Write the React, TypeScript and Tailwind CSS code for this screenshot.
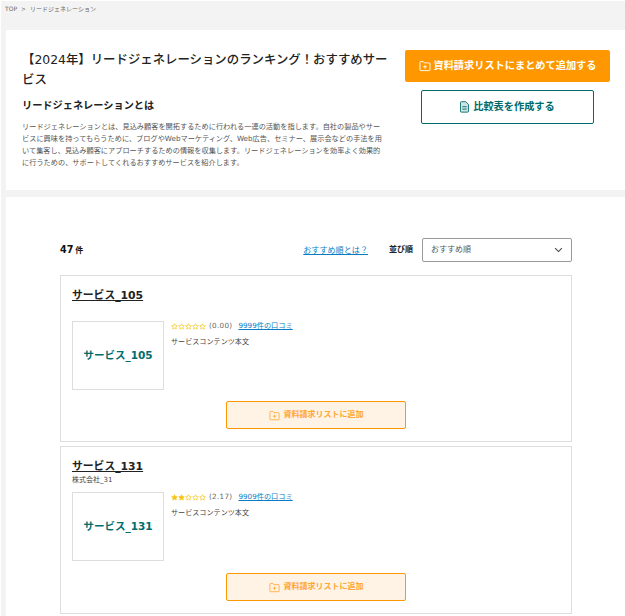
import React from "react";

const font = { fontFamily: '"DejaVu Sans","Noto Sans CJK JP",sans-serif' };

function FolderPlus({ className }: { className: string }) {
  return (
    <svg viewBox="0 0 12 12" className={className} fill="none" stroke="currentColor" strokeWidth="0.9">
      <path d="M1 2.2 a.6 .6 0 0 1 .6-.6 H4.4 L5.4 2.9 H10.4 a.6 .6 0 0 1 .6 .6 V10 a.6 .6 0 0 1-.6 .6 H1.6 a.6 .6 0 0 1-.6-.6 Z" />
      <path d="M6 5 V8.6 M4.2 6.8 H7.8" />
    </svg>
  );
}

function FileIcon() {
  return (
    <svg viewBox="0 0 10 13" className="w-[9px] h-[12px] text-[#006a6a]" fill="#cfe3e3" stroke="currentColor" strokeWidth="1">
      <path d="M1.5 .6 H6.4 L9.4 3.6 V11.2 a1 1 0 0 1-1 1 H1.5 a1 1 0 0 1-1-1 V1.6 a1 1 0 0 1 1-1 Z" />
      <path d="M2.6 6.2 H7.4 M2.6 8.8 H7.4" fill="none" />
    </svg>
  );
}

function Star({ filled }: { filled: boolean }) {
  return (
    <svg viewBox="0 0 24 24" className="w-[7px] h-[7px]" fill={filled ? "#f5c518" : "none"} stroke="#f5c518" strokeWidth="2.4">
      <path d="M12 2.5l2.9 6.2 6.8.8-5 4.6 1.3 6.7-6-3.4-6 3.4 1.3-6.7-5-4.6 6.8-.8z" />
    </svg>
  );
}

function Card({ name, company, stars, score, reviews, heightClass }: { name: string; company?: string; stars: number; score: string; reviews: string; heightClass: string }) {
  return (
    <div className={`border border-[#dddddd] bg-white pl-[11px] pr-[11px] ${heightClass} flex flex-col`}>
      <div className="h-[45px] pt-[12px]">
        <div className="text-[10.8px] leading-[16px] font-bold text-[#222222] underline">{name}</div>
        {company && <div className="text-[7px] leading-[10px] text-[#444444]">{company}</div>}
      </div>
      <div className="flex gap-[6px]">
        <div className="w-[92px] h-[69px] pt-px border border-[#dddddd] flex items-center justify-center text-[10.5px] font-bold text-[#006d6d]">{name}</div>
        <div className="flex-1 pl-px">
          <div className="flex items-center text-[7.2px] leading-[10px] h-[10px]">
            <div className="flex w-[36px]">
              {[0, 1, 2, 3, 4].map((i) => (
                <Star key={i} filled={i < stars} />
              ))}
            </div>
            <span className="text-[#666666] ml-[2px] tracking-[0.3px]">({score})</span>
            <a className="text-[#0a7cc4] underline ml-[6px]">{reviews}の口コミ</a>
          </div>
          <div className="text-[7.1px] leading-[10px] text-[#444444] mt-[6px]">サービスコンテンツ本文</div>
        </div>
      </div>
      <div className={company ? "flex justify-center mt-[12px]" : "flex justify-center mt-[11px]"}>
        <button className="w-[180px] h-[28px] bg-[#fff3e6] border border-[#ff9800] rounded-[2px] flex items-center justify-center gap-[4px] text-[#ffa733] text-[8px] font-bold">
          <FolderPlus className="w-[11px] h-[11px] text-[#ffa733]" />
          資料請求リストに追加
        </button>
      </div>
    </div>
  );
}

export default function App() {
  return (
    <div style={font} className="w-[625px] h-[616px] overflow-hidden bg-white pt-px pl-px text-[#222222]">
      <div className="h-[615px] bg-[#f3f3f3]">
        <div className="h-[29px] pl-[4px] pt-[4px] text-[6px] leading-[8px] text-[#666666] flex gap-[4px]">
          <span>TOP</span>
          <span>&gt;</span>
          <span>リードジェネレーション</span>
        </div>
        <div className="ml-[5px] h-[160px] bg-white flex pl-[16px] pt-[20px]">
          <div className="w-[367px]">
            <h1 className="text-[12.4px] leading-[20px] font-medium text-[#222222]">【2024年】リードジェネレーションのランキング！おすすめサービス</h1>
            <h2 className="text-[10.2px] leading-[16px] font-bold mt-[8px]">リードジェネレーションとは</h2>
            <p className="w-[362px] text-[7.2px] leading-[12px] text-[#555555] mt-[7px]">
              リードジェネレーションとは、見込み顧客を開拓するために行われる一連の活動を指します。自社の製品やサービスに興味を持ってもらうために、ブログやWebマーケティング、Web広告、セミナー、展示会などの手法を用いて集客し、見込み顧客にアプローチするための情報を収集します。リードジェネレーションを効率よく効果的に行うための、サポートしてくれるおすすめサービスを紹介します。
            </p>
          </div>
          <div className="ml-[16px] w-[205px] flex flex-col items-center">
            <button className="w-[205px] h-[32px] bg-[#ff9800] rounded-[2px] flex items-center justify-center gap-[3px] text-white text-[10.2px] font-bold">
              <FolderPlus className="w-[12px] h-[12px] text-white" />
              資料請求リストにまとめて追加する
            </button>
            <button className="mt-[8px] w-[173px] h-[34px] border border-[#006a6a] rounded-[2px] flex items-center justify-center gap-[4px] text-[#006a6a] text-[10.2px] font-bold">
              <FileIcon />
              比較表を作成する
            </button>
          </div>
        </div>
        <div className="ml-[5px] mt-[7px] h-[419px] bg-white pl-[54px] pr-[53px] pt-[41px]">
          <div className="flex items-center h-[24px]">
            <div className="text-[9.6px] font-bold text-[#111111] pt-px">47<span className="text-[8px] ml-[2px]">件</span></div>
            <a className="ml-auto text-[8.1px] text-[#0a7cc4] underline">おすすめ順とは？</a>
            <span className="ml-[21px] text-[8px] font-bold text-[#222222]">並び順</span>
            <div className="ml-[9px] w-[150px] h-[24px] border border-[#999999] rounded-[2px] flex items-center justify-between pl-[8px] pr-[8px] text-[8px] text-[#555555]">
              おすすめ順
              <svg viewBox="0 0 12 8" className="w-[9px] h-[6px]" fill="none" stroke="#444444" strokeWidth="1.4"><path d="M1.5 1.5 L6 6 L10.5 1.5" /></svg>
            </div>
          </div>
          <div className="mt-[13px] flex flex-col gap-[4px]">
            <Card name="サービス_105" stars={0} score="0.00" reviews="9999件" heightClass="h-[167px]" />
            <Card name="サービス_131" company="株式会社_31" stars={2} score="2.17" reviews="9909件" heightClass="h-[168px]" />
          </div>
        </div>
      </div>
    </div>
  );
}
